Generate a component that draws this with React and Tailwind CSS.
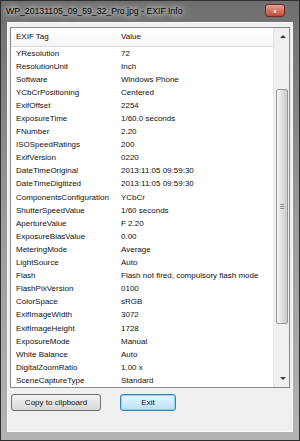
import React from "react";

const rows = [
  ["YResolution", "72"],
  ["ResolutionUnit", "Inch"],
  ["Software", "Windows Phone"],
  ["YCbCrPositioning", "Centered"],
  ["ExifOffset", "2254"],
  ["ExposureTime", "1/60.0 seconds"],
  ["FNumber", "2.20"],
  ["ISOSpeedRatings", "200"],
  ["ExifVersion", "0220"],
  ["DateTimeOriginal", "2013:11:05 09:59:30"],
  ["DateTimeDigitized", "2013:11:05 09:59:30"],
  ["ComponentsConfiguration", "YCbCr"],
  ["ShutterSpeedValue", "1/60 seconds"],
  ["ApertureValue", "F 2.20"],
  ["ExposureBiasValue", "0.00"],
  ["MeteringMode", "Average"],
  ["LightSource", "Auto"],
  ["Flash", "Flash not fired, compulsory flash mode"],
  ["FlashPixVersion", "0100"],
  ["ColorSpace", "sRGB"],
  ["ExifImageWidth", "3072"],
  ["ExifImageHeight", "1728"],
  ["ExposureMode", "Manual"],
  ["White Balance", "Auto"],
  ["DigitalZoomRatio", "1.00 x"],
  ["SceneCaptureType", "Standard"],
];

const App = () => {
  return (
    <div className="w-[300px] h-[441px] flex flex-col bg-gradient-to-b from-[#6f6f6f] via-[#9a9a9a] to-[#b4b4b4] border border-[#2e2e2e] font-['Liberation_Sans',Arial,sans-serif] text-[#111] overflow-hidden">
      {/* title bar */}
      <div className="h-[21px] flex items-center justify-between pl-[5px] pr-[14px] shrink-0">
        <span className="text-[8.7px] text-black [text-shadow:0_0_5px_#fff,0_0_8px_#fff]">
          WP_20131105_09_59_32_Pro.jpg - EXIF Info
        </span>
        <div className="w-[20px] h-[13px] mt-[-2px] rounded-[3px] border border-[#6b2a22] bg-gradient-to-b from-[#e4a394] to-[#c0453a] flex items-center justify-center">
          <span className="text-[6px] leading-none font-bold text-white">x</span>
        </div>
      </div>

      {/* client area */}
      <div className="flex-1 ml-[6px] mr-[6px] mb-[8px] bg-[#f0f0f0] border border-[#f8f8f8] flex flex-col pt-[4px] px-[2px]">
        {/* list */}
        <div className="h-[361px] bg-white border border-[#828790] flex shrink-0">
          <div className="flex-1 flex flex-col overflow-hidden">
            <div className="h-[19px] shrink-0 flex items-center text-[8px] bg-gradient-to-b from-white to-[#f3f4f6] border-b border-[#dcdcdc]">
              <span className="w-[110px] pl-[5px]">EXIF Tag</span>
              <span>Value</span>
            </div>
            {rows.map(([tag, value]) => (
              <div key={tag} className="h-[13.1px] shrink-0 flex items-center text-[8px] whitespace-nowrap">
                <span className="w-[110px] pl-[5px] shrink-0">{tag}</span>
                <span>{value}</span>
              </div>
            ))}
          </div>

          {/* scrollbar */}
          <div className="w-[16px] shrink-0 bg-[#f0f0f0] border-l border-[#e6e6e6] flex flex-col">
            <div className="h-[17px] flex items-center justify-center pl-[2px]">
              <div className="w-0 h-0 border-l-[3px] border-r-[3px] border-b-[3px] border-l-transparent border-r-transparent border-b-[#3a3a3a]" />
            </div>
            <div className="flex-1 pl-[2px] pr-[1px] pt-[44px]">
              <div className="h-[235px] rounded-[2px] border border-[#979797] bg-gradient-to-r from-[#f4f4f4] via-[#e0e0e0] to-[#c9c9c9] flex flex-col items-center justify-center gap-[1px]">
                <div className="w-[4px] h-px bg-[#8a8a8a]" />
                <div className="w-[4px] h-px bg-[#8a8a8a]" />
                <div className="w-[4px] h-px bg-[#8a8a8a]" />
              </div>
            </div>
            <div className="h-[17px] flex items-center justify-center pl-[2px]">
              <div className="w-0 h-0 border-l-[3px] border-r-[3px] border-t-[3px] border-l-transparent border-r-transparent border-t-[#3a3a3a]" />
            </div>
          </div>
        </div>

        {/* buttons */}
        <div className="flex items-center gap-[19px] mt-[6px] pl-[1px]">
          <button className="w-[90px] h-[17px] rounded-[3px] border border-[#707070] bg-gradient-to-b from-[#f2f2f2] to-[#d8d8d8] text-[8px] text-[#111] flex items-center justify-center">
            Copy to clipboard
          </button>
          <button className="w-[56px] h-[17px] rounded-[3px] border border-[#3c7fb1] bg-gradient-to-b from-[#eaf6fd] to-[#b6e0f8] text-[8px] text-[#111] flex items-center justify-center shadow-[inset_0_0_0_1px_#8ed3f5]">
            Exit
          </button>
        </div>
      </div>
    </div>
  );
};

export default App;
